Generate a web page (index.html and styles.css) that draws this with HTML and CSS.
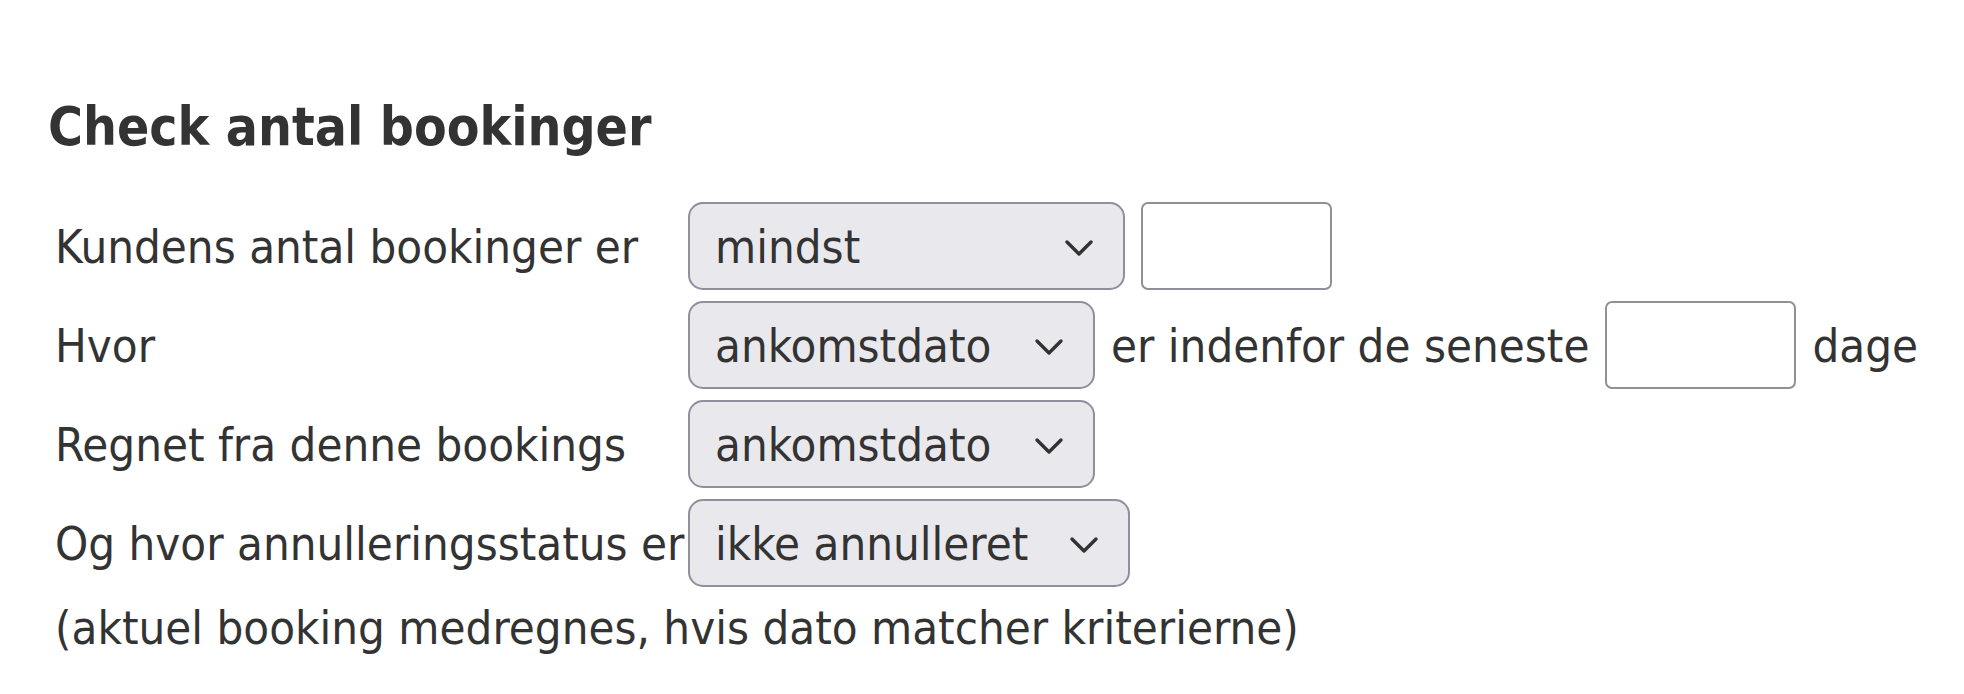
FILE: index.html
```html
<!DOCTYPE html>
<html lang="da">
<head>
<meta charset="utf-8">
<title>Check antal bookinger</title>
<link rel="stylesheet" href="styles.css">
</head>
<body>
<div class="page">
  <h2 class="title">Check antal bookinger</h2>
  <div class="form">
    <div class="label">Kundens antal bookinger er</div>
    <div class="field">
      <span class="select-wrap w-mindst">
        <select class="select"><option>mindst</option><option>højst</option><option>præcis</option></select>
        <svg class="chev" viewBox="0 0 32 20"><polyline points="4,4 16,16 28,4"/></svg>
      </span>
      <input class="num" type="text">
    </div>

    <div class="label">Hvor</div>
    <div class="field">
      <span class="select-wrap w-dato">
        <select class="select"><option>ankomstdato</option><option>afrejsedato</option><option>bookingdato</option></select>
        <svg class="chev" viewBox="0 0 32 20"><polyline points="4,4 16,16 28,4"/></svg>
      </span>
      <span class="text">er indenfor de seneste</span>
      <input class="num" type="text">
      <span class="text">dage</span>
    </div>

    <div class="label">Regnet fra denne bookings</div>
    <div class="field">
      <span class="select-wrap w-dato">
        <select class="select"><option>ankomstdato</option><option>afrejsedato</option><option>bookingdato</option></select>
        <svg class="chev" viewBox="0 0 32 20"><polyline points="4,4 16,16 28,4"/></svg>
      </span>
    </div>

    <div class="label">Og hvor annulleringsstatus er</div>
    <div class="field">
      <span class="select-wrap w-status">
        <select class="select"><option>ikke annulleret</option><option>annulleret</option><option>alle</option></select>
        <svg class="chev" viewBox="0 0 32 20"><polyline points="4,4 16,16 28,4"/></svg>
      </span>
    </div>

    <div class="note">(aktuel booking medregnes, hvis dato matcher kriterierne)</div>
  </div>
</div>
</body>
</html>
```

FILE: styles.css
```css
html, body {
  margin: 0;
  padding: 0;
  background: #ffffff;
}

body {
  font-family: "DejaVu Sans Condensed", "DejaVu Sans", Verdana, sans-serif;
  color: #333333;
}

.page {
  padding: 96px 0 0 48px;
}

.title {
  margin: 0 0 44px 0;
  font-size: 53px;
  line-height: 62px;
  font-weight: bold;
  color: #333333;
}

.form {
  display: grid;
  grid-template-columns: 633px auto;
  row-gap: 11px;
  padding-left: 7px;
  font-size: 47px;
}

.label {
  display: flex;
  align-items: center;
  height: 88px;
  white-space: nowrap;
}

.field {
  display: flex;
  align-items: center;
  gap: 16px;
  height: 88px;
}

.text {
  white-space: nowrap;
}

.select-wrap {
  position: relative;
  display: block;
  height: 88px;
}

.w-mindst { width: 437px; }
.w-dato { width: 407px; }
.w-status { width: 442px; }

.select {
  -webkit-appearance: none;
  -moz-appearance: none;
  appearance: none;
  box-sizing: border-box;
  width: 100%;
  height: 88px;
  margin: 0;
  padding: 0 64px 0 25px;
  border: 2px solid #8f8f9d;
  border-radius: 15px;
  background: #e9e9ed;
  color: #333333;
  font-family: inherit;
  font-size: 47px;
}

.chev {
  position: absolute;
  right: 30px;
  top: 36px;
  width: 32px;
  height: 20px;
  pointer-events: none;
}

.chev polyline {
  fill: none;
  stroke: #333333;
  stroke-width: 3.4;
  stroke-linecap: round;
  stroke-linejoin: round;
}

.num {
  box-sizing: border-box;
  width: 191px;
  height: 88px;
  margin: 0;
  padding: 0 10px;
  border: 2px solid #8f8f9d;
  border-radius: 7px;
  background: #ffffff;
  font-family: inherit;
  font-size: 47px;
}

.note {
  grid-column: 1 / 3;
  line-height: 60px;
  white-space: nowrap;
}
```
